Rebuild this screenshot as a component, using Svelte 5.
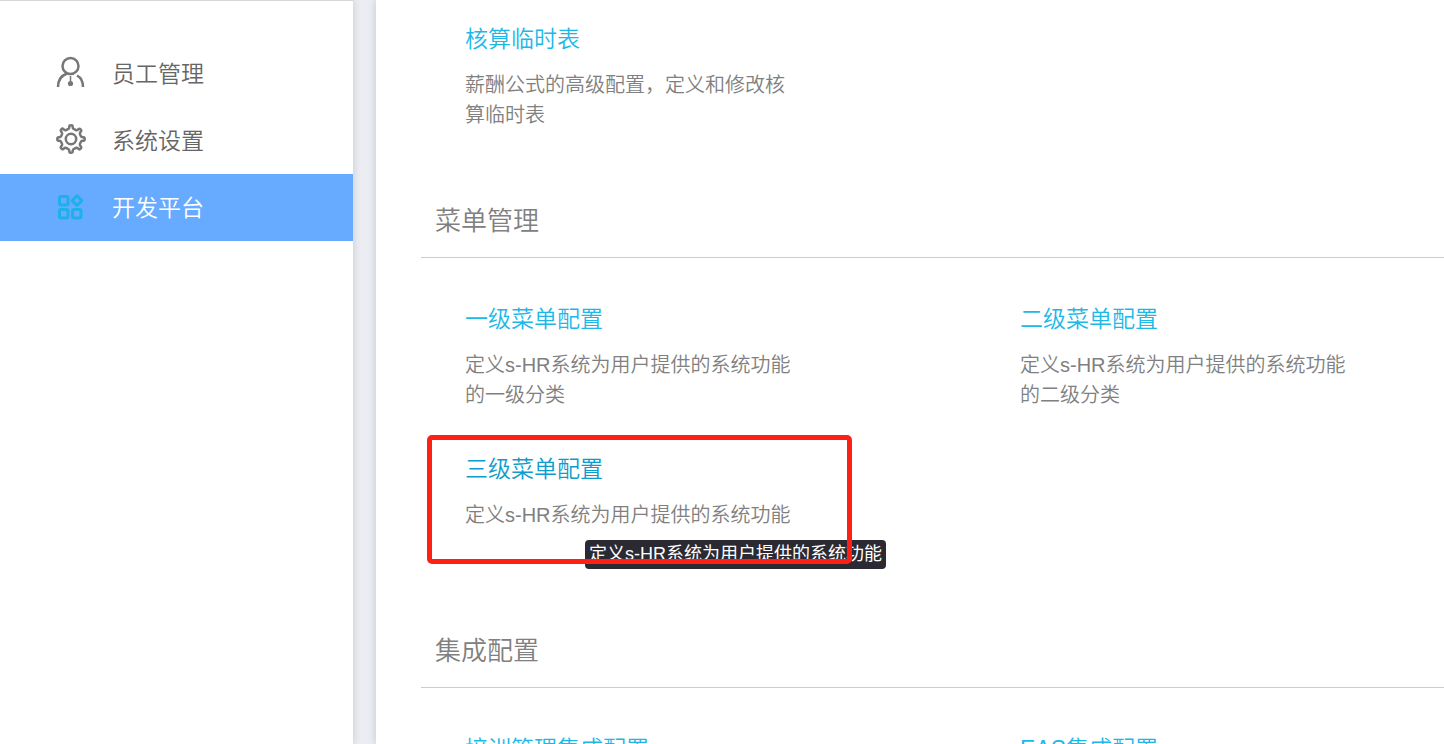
<script lang="ts">
	type Icon = 'person' | 'gear' | 'blocks';

	interface Entry {
		title: string;
		text: string;
		tip?: string;
	}

	interface Section {
		name: string;
		entries: Entry[];
	}

	const menu: { icon: Icon; label: string }[] = [
		{ icon: 'person', label: '员工管理' },
		{ icon: 'gear', label: '系统设置' },
		{ icon: 'blocks', label: '开发平台' }
	];

	const sections: Section[] = [
		{
			name: '',
			entries: [{ title: '核算临时表', text: '薪酬公式的高级配置，定义和修改核算临时表' }]
		},
		{
			name: '菜单管理',
			entries: [
				{ title: '一级菜单配置', text: '定义s-HR系统为用户提供的系统功能的一级分类' },
				{ title: '二级菜单配置', text: '定义s-HR系统为用户提供的系统功能的二级分类' },
				{
					title: '三级菜单配置',
					text: '定义s-HR系统为用户提供的系统功能',
					tip: '定义s-HR系统为用户提供的系统功能'
				}
			]
		},
		{
			name: '集成配置',
			entries: [
				{ title: '培训管理集成配置', text: '' },
				{ title: 'EAS集成配置', text: '' }
			]
		}
	];

	let active = $state<Icon>('blocks');
</script>

<div class="layout">
	<nav class="sidebar">
		{#each menu as item}
			<a
				href="#{item.icon}"
				class="menu-item"
				class:active={active === item.icon}
				onclick={() => (active = item.icon)}
			>
				<svg class="icon" viewBox="0 0 32 32" aria-hidden="true">
					{#if item.icon === 'person'}
						<circle cx="15.500" cy="10" r="8" />
						<path d="M3 31c0-7 3.500-11.500 9-13.500M22 19.500c4 2 6 6 6 11.500" />
						<path class="thin" d="M15.500 20v6" />
						<circle class="dot" cx="15.500" cy="27.500" r="2.600" />
					{:else if item.icon === 'gear'}
						<path
							d="M13 6.200Q14.300 5.700 14.300 4.300V3.500Q14.300 2.300 16 2.300T17.700 3.500V4.300Q17.700 5.700 19 6.200L20.800 7Q22 7.500 23 6.600L23.600 6Q24.600 5.300 25.700 6.300T26 8.400L25.400 9Q24.500 10 25 11.200L25.800 13Q26.300 14.300 27.700 14.300H28.500Q29.700 14.300 29.700 16T28.500 17.700H27.700Q26.300 17.700 25.800 19L25 20.800Q24.500 22 25.400 23L26 23.600Q26.700 24.600 25.700 25.700T23.600 26L23 25.400Q22 24.500 20.800 25L19 25.800Q17.700 26.300 17.700 27.700V28.500Q17.700 29.700 16 29.700T14.300 28.500V27.700Q14.300 26.300 13 25.800L11.200 25Q10 24.500 9 25.400L8.400 26Q7.400 26.700 6.300 25.700T6 23.600L6.600 23Q7.500 22 7 20.800L6.200 19Q5.700 17.700 4.300 17.700H3.500Q2.300 17.700 2.300 16T3.500 14.300H4.300Q5.700 14.300 6.200 13L7 11.200Q7.500 10 6.600 9L6 8.400Q5.300 7.400 6.300 6.300T8.400 6L9 6.600Q10 7.500 11.200 7Z"
						/>
						<circle cx="16" cy="16" r="5.200" />
					{:else}
						<rect x="4.500" y="6.500" width="8.500" height="8.500" rx="1.500" />
						<rect x="4.500" y="19.500" width="8.500" height="8.500" rx="1.500" />
						<rect x="17.500" y="19.500" width="8.500" height="8.500" rx="1.500" />
						<path d="M22 5.800 26.800 10.600 22 15.400 17.200 10.600z" />
					{/if}
				</svg>
				<span>{item.label}</span>
			</a>
		{/each}
	</nav>

	<main class="content">
		{#each sections as section}
			<section>
				{#if section.name}
					<h2>{section.name}</h2>
				{/if}
				<div class="entries">
					{#each section.entries as entry}
						<article class="entry" class:marked={entry.tip}>
							<a href="#{entry.title}">{entry.title}</a>
							<p>{entry.text}</p>
							{#if entry.tip}
								<div class="tooltip" role="tooltip">{entry.tip}</div>
								<div class="marker"></div>
							{/if}
						</article>
					{/each}
				</div>
			</section>
		{/each}
	</main>
</div>

<style>
	:global(body) {
		background: #ecedf3;
		font-family: 'Liberation Sans', 'Noto Sans CJK SC', sans-serif;
		font-weight: 350;
	}

	.layout {
		display: flex;
		gap: 23px;
		height: 100vh;
		overflow: hidden;
	}

	.sidebar {
		flex: 0 0 353px;
		box-sizing: border-box;
		padding-top: 39px;
		border-top: 1px solid #d5d6da;
		background: #fff;
		box-shadow: 0 0 8px rgba(0, 0, 0, 0.16);
	}

	.menu-item {
		display: flex;
		align-items: center;
		gap: 25px;
		box-sizing: border-box;
		height: 67px;
		padding: 0 0 4px 55px;
		color: #666;
		font-size: 23px;
		text-decoration: none;
	}

	.menu-item.active {
		background: #66abff;
		color: #fff;
	}

	.icon {
		width: 32px;
		height: 32px;
		fill: none;
		stroke: #777;
		stroke-width: 2.5;
		stroke-linejoin: round;
	}

	.icon .thin {
		stroke-width: 1.5;
	}

	.icon .dot {
		fill: #777;
		stroke: none;
	}

	.active .icon {
		stroke: #1fb0ea;
		stroke-width: 3;
	}

	.content {
		flex: 1;
		min-width: 0;
		box-sizing: border-box;
		padding-left: 45px;
		background: #fff;
		box-shadow: 0 0 8px rgba(0, 0, 0, 0.16);
	}

	h2 {
		margin: 0;
		padding: 27px 14px 16px;
		border-bottom: 1px solid #ccc;
		color: #808080;
		font-size: 26px;
		font-weight: 350;
		line-height: 40px;
	}

	.entries {
		display: grid;
		grid-template-columns: 555px minmax(0, 1fr);
		padding: 24px 0 0 44px;
	}

	h2 + .entries {
		padding-top: 46px;
	}

	.entry {
		position: relative;
		padding-bottom: 44px;
	}

	.entry a {
		display: block;
		color: #1cb8e8;
		font-size: 23px;
		line-height: 30px;
		text-decoration: none;
	}

	.entry.marked a {
		color: #0d9ccb;
	}

	.entry p {
		max-width: 330px;
		min-height: 60px;
		margin: 16px 0 0;
		color: #808080;
		font-size: 20px;
		line-height: 30px;
	}

	.tooltip {
		position: absolute;
		top: 86px;
		left: 120px;
		padding: 0 4px;
		border-radius: 4px;
		background: #2b2a33;
		color: #fff;
		font-size: 18px;
		font-weight: 400;
		line-height: 29px;
		white-space: nowrap;
	}

	/* highlight frame, drawn above the tooltip */
	.marker {
		position: absolute;
		top: -19px;
		left: -38px;
		box-sizing: border-box;
		width: 425px;
		height: 129px;
		border: 5px solid #ff2015;
		border-radius: 5px;
		pointer-events: none;
	}
</style>
